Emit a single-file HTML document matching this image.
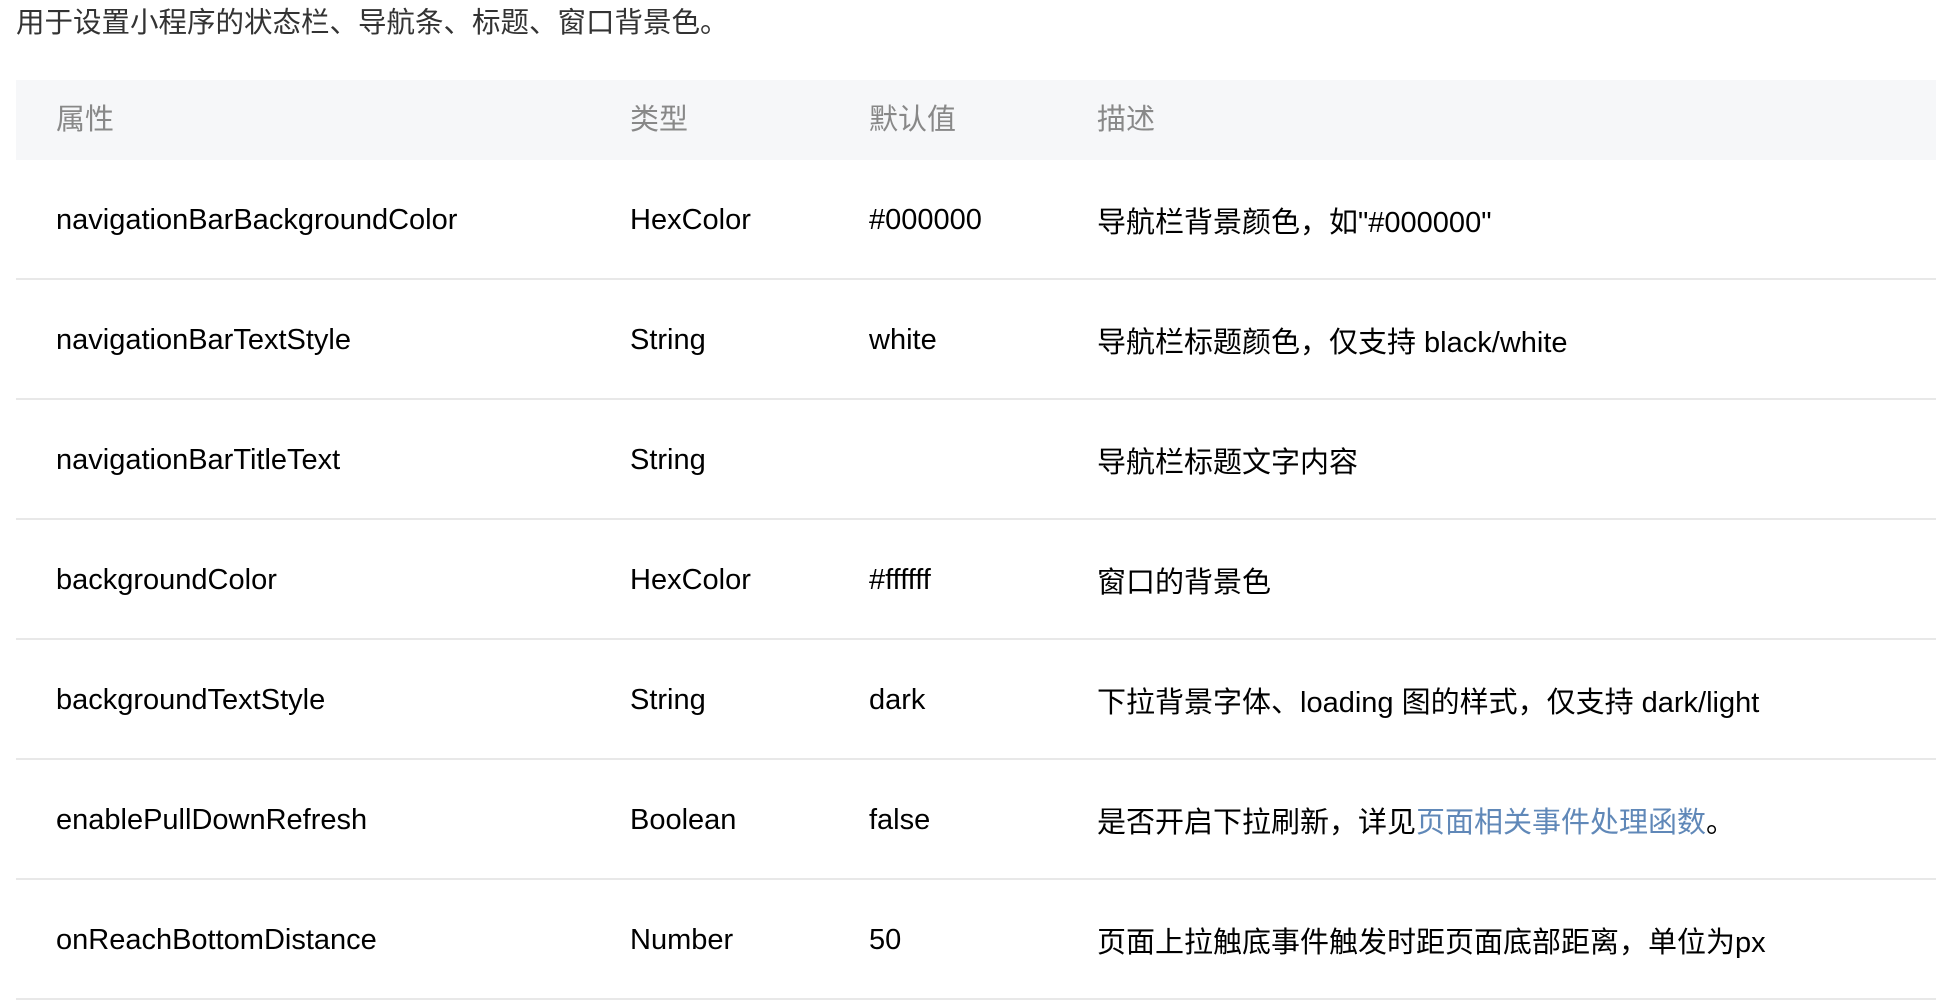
<!DOCTYPE html>
<html><head><meta charset="utf-8"><style>
body{margin:0;background:#fff;width:1956px;height:1002px;overflow:hidden;font-family:"Liberation Sans","Noto Sans CJK SC",sans-serif;color:#000;}
.desc{position:absolute;left:16px;top:5px;font-size:28.5px;line-height:36px;color:#333;}
table{position:absolute;left:16px;top:80px;width:1920px;border-collapse:collapse;font-size:29px;table-layout:fixed;}
th{background:#f6f7f9;height:74px;text-align:left;font-weight:normal;color:#888;padding:0 0 6px 0;}
td{height:116px;border-bottom:2px solid #e8e8e8;padding:2px 0 0 0;}
th:first-child,td:first-child{padding-left:40px;}
.c1{width:574px}.c2{width:239px}.c3{width:228px}
a{color:#6088b8;text-decoration:none}
</style></head><body>
<div class="desc">用于设置小程序的状态栏、导航条、标题、窗口背景色。</div>
<table>
<tr><th class="c1">属性</th><th class="c2">类型</th><th class="c3">默认值</th><th>描述</th></tr>
<tr><td>navigationBarBackgroundColor</td><td>HexColor</td><td>#000000</td><td>导航栏背景颜色，如"#000000"</td></tr>
<tr><td>navigationBarTextStyle</td><td>String</td><td>white</td><td>导航栏标题颜色，仅支持 black/white</td></tr>
<tr><td>navigationBarTitleText</td><td>String</td><td></td><td>导航栏标题文字内容</td></tr>
<tr><td>backgroundColor</td><td>HexColor</td><td>#ffffff</td><td>窗口的背景色</td></tr>
<tr><td>backgroundTextStyle</td><td>String</td><td>dark</td><td>下拉背景字体、loading 图的样式，仅支持 dark/light</td></tr>
<tr><td>enablePullDownRefresh</td><td>Boolean</td><td>false</td><td>是否开启下拉刷新，详见<a>页面相关事件处理函数</a>。</td></tr>
<tr><td>onReachBottomDistance</td><td>Number</td><td>50</td><td>页面上拉触底事件触发时距页面底部距离，单位为px</td></tr>
</table>
</body></html>
